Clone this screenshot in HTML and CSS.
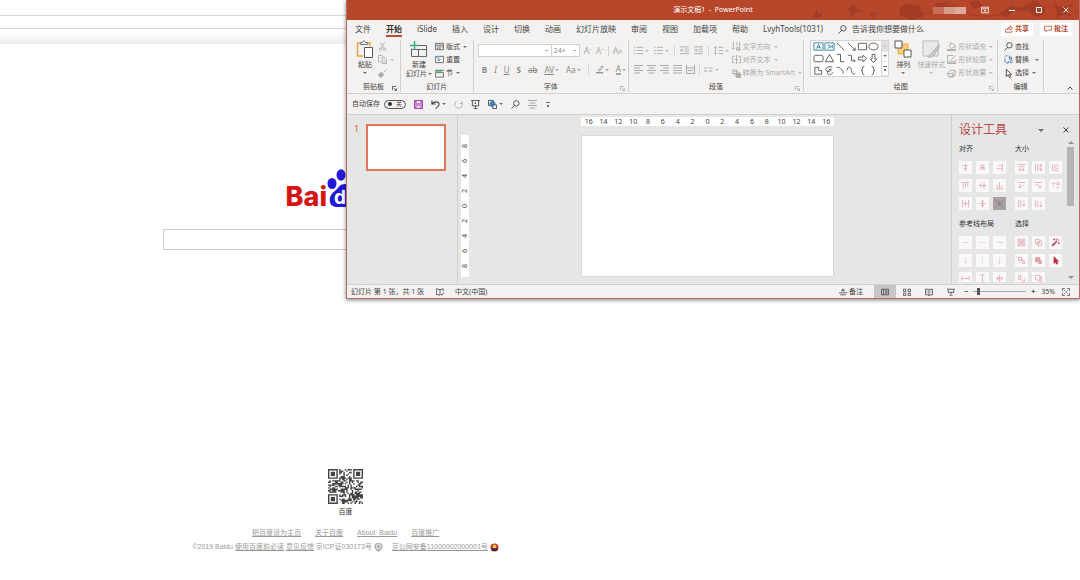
FILE: index.html
```
<!DOCTYPE html>
<html lang="zh-CN">
<head>
  <meta charset="UTF-8" />
  <title>演示文稿1 - PowerPoint</title>
  <link rel="stylesheet" href="styles.css">
</head>
<body>
  <svg class="sprite" aria-hidden="true">
    <symbol id="paste" viewBox="0 0 18 18"><path d="M7 16H1.500V3H5M10 3h4v3" stroke="#e8a33d" stroke-width="1.500"/><path d="M4.500 4.500v-2h2c0-2 3-2 3 0h2v2z" fill="#fff" stroke="#777"/><path d="M8.500 7.500h8v10h-8z" fill="#fff" stroke="#555"/></symbol>
    <symbol id="cut" viewBox="0 0 10 10"><path d="M2.500 0.500L6.500 7M7.500 0.500L3.500 7"/><circle cx="2.700" cy="8" r="1.300"/><circle cx="7.300" cy="8" r="1.300"/></symbol>
    <symbol id="copy" viewBox="0 0 10 10"><path d="M3 7.500H0.500v-7h4l1.500 1.500"/><path d="M4.500 2.500h3l2 2v5h-5zM6 5.500h2M6 7.500h2"/></symbol>
    <symbol id="brush" viewBox="0 0 10 10"><path d="M9.500 0.500L6 4M3.500 3.500l3 3"/><path d="M3 4l3 3-3 2.500-2.500-3z" fill="currentColor"/></symbol>
    <symbol id="newslide" viewBox="0 0 18 16"><path d="M4.500 4.500h12v11h-15v-8M8.500 8v7M2 8.500h14" stroke="#666"/><path d="M4.500 0v9M0 4.500h9" stroke="#3fae7c" stroke-width="1.500"/></symbol>
    <symbol id="layout" viewBox="0 0 10 8"><path d="M.5.500h9v7h-9zM.5 2.500h9M5.500 3v4M2 4.500h2M7 4.500h1.500M2 6h2" stroke="#666"/></symbol>
    <symbol id="reset" viewBox="0 0 10 8"><path d="M3.500.500h6v7h-9V3" stroke="#666"/><path d="M.5 3V.5H3M.5 1c3 0 4 1 4 4M3 4l1.500 1.500L6 4" stroke="#3983bd"/></symbol>
    <symbol id="section" viewBox="0 0 10 9"><path d="M0 1h10M.5 3.500h9v5h-9z" stroke="#666"/><path d="M0 1.500h8" stroke="#4ca779" stroke-width="2"/></symbol>
    <symbol id="list" viewBox="0 0 10 9"><path d="M0 1h1.500M3 1h7M0 4.500h1.500M3 4.500h7M0 8h1.500M3 8h7"/></symbol>
    <symbol id="numlist" viewBox="0 0 10 9"><path d="M1 0v2M3 1h7M0 4.500h2M3 4.500h7M1 7v2M3 8h7"/></symbol>
    <symbol id="indent" viewBox="0 0 10 9"><path d="M0 .5h10M5 3h5M5 5.500h5M0 8h10M4 4.200H.5M2 2.500L.5 4.200 2 6"/></symbol>
    <symbol id="outdent" viewBox="0 0 10 9"><path d="M0 .5h10M5 3h5M5 5.500h5M0 8h10M0 4.200h3.500M2 2.500l1.500 1.700L2 6"/></symbol>
    <symbol id="spacing" viewBox="0 0 10 9"><path d="M1.500 0v9M0 2l1.500-1.500L3 2M0 7l1.500 1.500L3 7M5 1h5M5 4.500h5M5 8h5"/></symbol>
    <symbol id="left" viewBox="0 0 9 9"><path d="M0 .5h9M0 3h6M0 5.500h9M0 8h6"/></symbol>
    <symbol id="center" viewBox="0 0 9 9"><path d="M0 .5h9M1.500 3h6M0 5.500h9M1.500 8h6"/></symbol>
    <symbol id="right" viewBox="0 0 9 9"><path d="M0 .5h9M3 3h6M0 5.500h9M3 8h6"/></symbol>
    <symbol id="justify" viewBox="0 0 9 9"><path d="M0 .5h9M0 3h9M0 5.500h9M0 8h9"/></symbol>
    <symbol id="distribute" viewBox="0 0 9 9"><path d="M.5 0v9M8.500 0v9M0 3h9M2 5.500h5M0 8.500h9"/></symbol>
    <symbol id="columns" viewBox="0 0 9 9"><path d="M0 3h3.500M5 3h3.500M0 6h3.500M5 6h3.500"/></symbol>
    <symbol id="direction" viewBox="0 0 10 10"><path d="M1.500 0v8M0 6.500L1.500 8 3 6.500M5.500 0v4M8.500 0v10M5 6h2v3H5zM7 8l1.500 1.500L10 8"/></symbol>
    <symbol id="aligntext" viewBox="0 0 10 10"><path d="M3 1.500H.5v7H3M7 1.500h2.500v7H7M5 0v10M3 5h4"/></symbol>
    <symbol id="smartart" viewBox="0 0 10 10"><path d="M.5 1h5v4h-5zM3 5v2.500h2M5 4.500h4.500v5H5zM2 3h5"/><path d="M6 5.500h3v3H6z" fill="currentColor"/></symbol>
    <symbol id="arrange" viewBox="0 0 18 18"><path d="M4 4h10v10H4z" fill="#f8cb78" stroke="#e9aa42"/><path d="M1 1h7v7H1zM10 10h7v7h-7z" fill="#fff" stroke="#555"/></symbol>
    <symbol id="quickstyle" viewBox="0 0 19 19"><path d="M1 1h16v16H1z" fill="#e9e9e9" stroke="#bbb"/><path d="M18 5l-7 8-5 5c4 0 6 0 7-3l5-7z" fill="#ccc" stroke="#aaa"/></symbol>
    <symbol id="fill" viewBox="0 0 10 10"><path d="M2 4.500L5.500 1 9 4.500 5 7.500zM4 0v3M9 5v2"/><path d="M0 9h10" stroke-width="2"/></symbol>
    <symbol id="outline" viewBox="0 0 10 10"><path d="M7 .5H.5v7h9V5M9.500.500L4 6"/><path d="M0 9.300h10" stroke-width="1.500"/></symbol>
    <symbol id="effect" viewBox="0 0 10 10"><path d="M3.500 1.500h5l1 2.500-3 4h-5l-1-3zM.5 5h5.500l3-3M6 5l.5 3M2 9h5l3-4"/></symbol>
    <symbol id="find" viewBox="0 0 10 10"><circle cx="6" cy="3.700" r="3"/><path d="M4 6L.5 9.500"/></symbol>
    <symbol id="replace" viewBox="0 0 10 10"><path d="M6 .5v4M6 2.500h2.500v2H6M1 2.500C1 1 2.500.500 4 1M1 4l0 3c1 2 3 2 4 1M4 6.500L5.500 8 4 9.500M9.500 6h-2v2.500h2" stroke="#4677b8"/></symbol>
    <symbol id="select" viewBox="0 0 10 10"><path d="M2.500.500v8l2-2 1.500 3 1.500-.5-1.500-3h2.500z"/></symbol>
    <symbol id="launcher" viewBox="0 0 5 5"><path d="M.5 4V.5H4M2 2l2.500 2.500M4.500 2.500v2h-2"/></symbol>
    <symbol id="pen" viewBox="0 0 10 10"><path d="M3 6l4.500-5.500L9 2 4.500 7z"/><path d="M0 9h9" stroke-width="1.500"/></symbol>
    <symbol id="save" viewBox="0 0 10 10"><path d="M.7.700h8.600v8.600H.700z" fill="#d68be0" stroke="#a04cae" stroke-width="1.200"/><path d="M2.500 1h5v3h-5zM2.500 6.500h5V9h-5z" fill="#fff" stroke="#a04cae" stroke-width=".6"/></symbol>
    <symbol id="undo" viewBox="0 0 10 10"><path d="M1 .5v4h4M1 4.500C3.500 1 9 1.500 9 5c0 2-2 3-4 4.500" stroke-width="1.200"/></symbol>
    <symbol id="redo" viewBox="0 0 10 10"><path d="M9 1v3H6M3 1C-1 4 1 9 5 9s6-3 4-5.500"/></symbol>
    <symbol id="present" viewBox="0 0 10 10"><path d="M0 .5h10M1.500 1v5.500h7V1M5 6.500V9M3 9.500h4"/><path d="M4.500 2.800v1.500l1-.7z" fill="currentColor"/></symbol>
    <symbol id="shapes" viewBox="0 0 10 10"><path d="M.5.500h5.500v5.500H.500z" fill="#fff"/><circle cx="5" cy="4.500" r="3" fill="#3c86c6" stroke="#3c86c6"/><path d="M5.500 5.500h4v4h-4z" fill="#fff"/></symbol>
    <symbol id="comment" viewBox="0 0 10 10"><path d="M.5 1.500h9v5h-5l-2 2v-2h-2z"/></symbol>
    <symbol id="share" viewBox="0 0 10 10"><path d="M.5 5v4h8V7M2.500 6c0-2 2-3 4-3V1L9.500 4 6.500 6V5c-2 0-3 0-4 1z"/></symbol>
    <symbol id="book" viewBox="0 0 10 10"><path d="M5 2L.5 1v7L5 9V2l4-1v3M6 7.500l1.500 1.500L10 5.500"/></symbol>
    <symbol id="notes" viewBox="0 0 10 10"><path d="M3 3.500h4L5 1zM0 6h10M1.500 8.500h7"/></symbol>
    <symbol id="normal" viewBox="0 0 10 10"><path d="M.5 1.500h9v7h-9zM3 1.500v7M5 3.500h3M5 6.500h3M5 5h3"/></symbol>
    <symbol id="sorter" viewBox="0 0 10 10"><path d="M.5 1.500h3v3h-3zM6.500 1.500h3v3h-3zM.5 6.500h3v3h-3zM6.500 6.500h3v3h-3z"/></symbol>
    <symbol id="reading" viewBox="0 0 10 10"><path d="M.5 1.500h3L5 2.500l1.500-1h3v7h-3L5 9.500l-1.500-1h-3zM5 2.500v7M2 3.500h1M2 5.500h1M7 3.500h1M7 5.500h1"/></symbol>
    <symbol id="show" viewBox="0 0 10 10"><path d="M0 1.500h10M1.500 2v3.500h7V2M5 5.500V8M3 9h4"/></symbol>
    <symbol id="fit" viewBox="0 0 10 10"><path d="M3.500.500h-3v3M6.500.500h3v3M.5 6.500v3h3M9.500 6.500v3h-3M3 3l1.300 1.300M7 3L5.700 4.300M3 7l1.300-1.300M7 7L5.700 5.700"/></symbol>
    <symbol id="ribbonopt" viewBox="0 0 10 10"><path d="M.5 1.500h9v7h-9zM.5 3.500h9M5 8V5M3.500 6.200L5 5l1.500 1.200"/></symbol>
    <symbol id="min" viewBox="0 0 8 8"><path d="M1 4.500h6"/></symbol>
    <symbol id="max" viewBox="0 0 8 8"><path d="M1.500 1.500h5v5h-5z"/></symbol>
    <symbol id="close" viewBox="0 0 8 8"><path d="M1.500 1.500l5 5M6.500 1.500l-5 5"/></symbol>
  </svg>

  <div class="browser">
    <div class="browser-bars">
      <div class="bar"></div>
      <div class="bar bookmarks"></div>
      <div class="bar-shade"></div>
    </div>

    <main class="baidu">
      <div class="logo">
        <span>Bai</span>
        <svg class="paw" viewBox="0 0 36 40">
          <g fill="#2319dc"><ellipse cx="5" cy="15.500" rx="4.500" ry="5.500"/><ellipse cx="14" cy="7" rx="4.500" ry="5.800"/><ellipse cx="25" cy="7" rx="4.500" ry="5.800"/><ellipse cx="32" cy="17" rx="4" ry="5.500"/><path d="M18 16c-5 0-6 3-9 6-5 4-7 7-6 12 1 6 8 5 15 5s15 1 16-5c0-5-2-8-7-12-3-3-4-6-9-6z"/></g>
          <text x="7" y="36" class="paw-text">du</text>
        </svg>
      </div>
      <form class="search"><input type="text" aria-label="百度搜索"></form>
    </main>

    <footer class="foot">
      <svg class="qr" id="qr" viewBox="0 0 25 25"></svg>
      <p class="qr-label">百度</p>
      <nav class="foot-links">
        <a href="#">把百度设为主页</a>
        <a href="#">关于百度</a>
        <a href="#">About&nbsp; Baidu</a>
        <a href="#">百度推广</a>
      </nav>
      <p class="copyright">©2019 Baidu <a href="#">使用百度前必读</a> <a href="#">意见反馈</a> 京ICP证030173号
        <svg class="badge" viewBox="0 0 10 10"><path d="M5 0c3 0 4.500 1 4.500 4C9.500 7 7 8 5 10 3 8 .5 7 .5 4 .5 1 2 0 5 0z" fill="#aaa"/><circle cx="5" cy="4" r="2.400" fill="none" stroke="#fff"/></svg>
        <a href="#" class="police">京公网安备11000002000001号</a>
        <svg class="badge" viewBox="0 0 10 10"><circle cx="5" cy="5" r="4.500" fill="#c53a22"/><path d="M1 6h8L7.500 9h-5z" fill="#342c50"/><path d="M3 3l2-1.500L7 3l-.5 2.500h-3z" fill="#f3c94b"/></svg>
      </p>
    </footer>
  </div>

  <div class="ppt">
    <header class="titlebar">
      <svg class="flora" viewBox="0 0 270 20" preserveAspectRatio="xMaxYMid slice">
        <g fill="#a33c24"><path d="M3 17l5-7 2 4 4-3-3 7zM38 9l7-5 3 5 7 2-8 2-5 5-1-6zM60 14l8-2-4 6z"/><path d="M92 7c4-5 9-4 12-1 6-3 10 1 8 5 5 3 2 8-4 7-4 4-9 3-11-1-7 1-9-6-5-10z"/><path d="M125 4l18-3-7 5 14-2-12 6-3 6-5-7zM160 2l9-2 5 6-9 3zM190 14l12-8 9 2 15-7-9 9-12 1-8 7z"/><path d="M222 2c5-3 9 0 9 4 6 0 7 6 2 8-1 4-8 4-9 0-6-1-6-7-2-12zM245 3l8 5 12-5-7 8 7 7-10-4-8 5 1-8z"/></g>
        <path d="M110 14q30-6 50 0t50-4 60 4" fill="none" stroke="#a33c24"/>
      </svg>
      <h1>演示文稿1 &nbsp;- &nbsp;PowerPoint</h1>
      <div class="win-buttons">
        <span class="user"><i></i><i></i><i></i></span>
        <button aria-label="功能区显示选项"><svg><use href="#ribbonopt"/></svg></button>
        <button aria-label="最小化"><svg><use href="#min"/></svg></button>
        <button aria-label="最大化"><svg><use href="#max"/></svg></button>
        <button aria-label="关闭"><svg><use href="#close"/></svg></button>
      </div>
    </header>

    <nav class="tabs">
      <button>文件</button>
      <button class="active">开始</button>
      <button>iSlide</button>
      <button>插入</button>
      <button>设计</button>
      <button>切换</button>
      <button>动画</button>
      <button>幻灯片放映</button>
      <button>审阅</button>
      <button>视图</button>
      <button>加载项</button>
      <button>帮助</button>
      <button>LvyhTools(1031)</button>
      <button class="tell"><svg><use href="#find"/></svg>告诉我你想要做什么</button>
      <span class="tab-actions">
        <button><svg><use href="#share"/></svg>共享</button>
        <button><svg><use href="#comment"/></svg>批注</button>
      </span>
    </nav>

    <div class="ribbon">
      <section class="group">
        <div class="group-body clipboard">
          <button class="big"><svg class="lg"><use href="#paste"/></svg>粘贴<b class="caret"></b></button>
          <div class="stack off">
            <button aria-label="剪切"><svg><use href="#cut"/></svg></button>
            <button aria-label="复制"><svg><use href="#copy"/></svg><b class="caret"></b></button>
            <button aria-label="格式刷"><svg><use href="#brush"/></svg></button>
          </div>
        </div>
        <h2>剪贴板<svg class="launch"><use href="#launcher"/></svg></h2>
      </section>

      <section class="group">
        <div class="group-body slides">
          <button class="big"><svg class="lg"><use href="#newslide"/></svg>新建<span>幻灯片<b class="caret"></b></span></button>
          <div class="stack">
            <button><svg><use href="#layout"/></svg>版式<b class="caret"></b></button>
            <button><svg><use href="#reset"/></svg>重置</button>
            <button><svg><use href="#section"/></svg>节<b class="caret"></b></button>
          </div>
        </div>
        <h2>幻灯片</h2>
      </section>

      <section class="group">
        <div class="group-body two-rows off">
          <div class="tools">
            <select class="font-name" aria-label="字体"><option></option></select><select class="font-size" aria-label="字号"><option>24+</option></select>
            <button class="glyph">A<sup>ˆ</sup></button>
            <button class="glyph small-a">A<sup>ˇ</sup></button>
            <i class="sep"></i>
            <button class="glyph">A<sub>p</sub></button>
          </div>
          <div class="tools font-row">
            <button><strong>B</strong></button>
            <button><em>I</em></button>
            <button><u>U</u></button>
            <button><strong>S</strong></button>
            <button><s>ab</s></button>
            <button><u>AV</u><b class="caret"></b></button>
            <button>Aa<b class="caret"></b></button>
            <i class="sep"></i>
            <button aria-label="突出显示"><svg><use href="#pen"/></svg><b class="caret"></b></button>
            <button><span class="font-color">A</span><b class="caret"></b></button>
          </div>
        </div>
        <h2>字体<svg class="launch off"><use href="#launcher"/></svg></h2>
      </section>

      <section class="group">
        <div class="group-body paragraph off">
          <div class="two-rows">
            <div class="tools">
              <button aria-label="项目符号"><svg><use href="#list"/></svg><b class="caret"></b></button>
              <button aria-label="编号"><svg><use href="#numlist"/></svg><b class="caret"></b></button>
              <i class="sep"></i>
              <button aria-label="减少缩进"><svg><use href="#indent"/></svg></button>
              <button aria-label="增加缩进"><svg><use href="#outdent"/></svg></button>
              <i class="sep"></i>
              <button aria-label="行距"><svg><use href="#spacing"/></svg><b class="caret"></b></button>
            </div>
            <div class="tools align-row">
              <button aria-label="左对齐"><svg><use href="#left"/></svg></button>
              <button aria-label="居中"><svg><use href="#center"/></svg></button>
              <button aria-label="右对齐"><svg><use href="#right"/></svg></button>
              <button aria-label="两端对齐"><svg><use href="#justify"/></svg></button>
              <button aria-label="分散对齐"><svg><use href="#distribute"/></svg></button>
              <i class="sep"></i>
              <button aria-label="分栏"><svg><use href="#columns"/></svg><b class="caret"></b></button>
            </div>
          </div>
          <div class="stack">
            <button><svg><use href="#direction"/></svg>文字方向<b class="caret"></b></button>
            <button><svg><use href="#aligntext"/></svg>对齐文本<b class="caret"></b></button>
            <button><svg><use href="#smartart"/></svg>转换为 SmartArt<b class="caret"></b></button>
          </div>
        </div>
        <h2>段落<svg class="launch off"><use href="#launcher"/></svg></h2>
      </section>

      <section class="group">
        <div class="group-body drawing">
          <div class="gallery">
            <div class="gallery-items" id="gallery"></div>
            <div class="gallery-scroll">
              <button aria-label="上一行"><b class="caret up"></b></button>
              <button aria-label="下一行"><b class="caret"></b></button>
              <button aria-label="其他"><b class="caret more"></b></button>
            </div>
          </div>
          <button class="big"><svg class="lg"><use href="#arrange"/></svg>排列<b class="caret"></b></button>
          <button class="big off"><svg class="lg"><use href="#quickstyle"/></svg>快速样式<b class="caret"></b></button>
          <div class="stack off">
            <button><svg><use href="#fill"/></svg>形状填充<b class="caret"></b></button>
            <button><svg><use href="#outline"/></svg>形状轮廓<b class="caret"></b></button>
            <button><svg><use href="#effect"/></svg>形状效果<b class="caret"></b></button>
          </div>
        </div>
        <h2>绘图<svg class="launch off"><use href="#launcher"/></svg></h2>
      </section>

      <section class="group">
        <div class="group-body editing">
          <div class="stack">
            <button><svg><use href="#find"/></svg>查找</button>
            <button><svg><use href="#replace"/></svg>替换<b class="caret far"></b></button>
            <button><svg><use href="#select"/></svg>选择<b class="caret"></b></button>
          </div>
        </div>
        <h2>编辑</h2>
      </section>

      <div class="collapse"><button aria-label="折叠功能区"><svg viewBox="0 0 8 8"><path d="M1.500 5.500L4 3l2.500 2.500"/></svg></button></div>
    </div>

    <div class="qat">
      <label for="autosave">自动保存</label>
      <span class="switch"><input type="checkbox" id="autosave"><span>关</span></span>
      <button aria-label="保存"><svg><use href="#save"/></svg></button>
      <button aria-label="撤消"><svg><use href="#undo"/></svg><b class="caret"></b></button>
      <button aria-label="重做" class="off"><svg><use href="#redo"/></svg></button>
      <button aria-label="放映"><svg><use href="#present"/></svg></button>
      <button aria-label="形状"><svg><use href="#shapes"/></svg><b class="caret"></b></button>
      <button aria-label="查找"><svg><use href="#find"/></svg></button>
      <button aria-label="对齐" class="off"><svg><use href="#center"/></svg></button>
      <button aria-label="自定义"><b class="caret more"></b></button>
    </div>

    <div class="work">
      <aside class="thumbs">
        <span>1</span>
        <div class="thumb"></div>
      </aside>

      <div class="canvas">
        <div class="ruler-h" id="ruler-h"></div>
        <div class="ruler-v" id="ruler-v"></div>
        <div class="slide"></div>
      </div>

      <aside class="design">
        <div class="design-head">
          <h2>设计工具</h2>
          <button aria-label="选项"><b class="caret wide"></b></button>
          <button aria-label="关闭窗格"><svg><use href="#close"/></svg></button>
        </div>
        <div class="design-body">
          <div class="palettes" id="palettes"></div>
          <div class="scroll">
            <b class="caret wide up"></b>
            <div class="scroll-thumb"></div>
            <b class="caret wide"></b>
          </div>
        </div>
      </aside>
    </div>

    <footer class="status">
      <span>幻灯片 第 1 张，共 1 张</span>
      <svg class="proof"><use href="#book"/></svg>
      <span>中文(中国)</span>
      <div class="views">
        <button class="notes"><svg><use href="#notes"/></svg>备注</button>
        <button class="on" aria-label="普通视图"><svg><use href="#normal"/></svg></button>
        <button aria-label="幻灯片浏览"><svg><use href="#sorter"/></svg></button>
        <button aria-label="阅读视图"><svg><use href="#reading"/></svg></button>
        <button aria-label="幻灯片放映"><svg><use href="#show"/></svg></button>
      </div>
      <div class="zoom">
        <button><strong>−</strong></button>
        <input type="range" min="0" max="100" value="8" aria-label="缩放">
        <button><strong>+</strong></button>
        <span>35%</span>
        <button aria-label="适应窗口"><svg><use href="#fit"/></svg></button>
      </div>
    </footer>
  </div>

  <script>
    function icon(d, cls) {
      return `<svg class="${cls || ""}" viewBox="0 0 12 12"><path d="${d}"/></svg>`;
    }

    // shape gallery, three rows of six
    const shapes = [
      ["M1 2h10v8H1zM4 8.500L6 3.500l2 5M4.800 7h2.400", "blue"],
      ["M1 2h10v8H1zM4 4l4 2-4 2M9 4v4", "blue"],
      ["M2 2l8 8"],
      ["M2 2l8 8M10 7v3H7"],
      ["M1.500 2.500h9v7h-9z"],
      ["M1 6c0-5 10-5 10 0s-10 5-10 0z"],
      ["M3 2.500h6q2 0 2 2v3q0 2-2 2H3q-2 0-2-2v-3q0-2 2-2z"],
      ["M6 1.500l4.500 8h-9z"],
      ["M2 1.500h4v8h4"],
      ["M2 2.500h4v6h4M8.500 7L10 8.500 8.500 10"],
      ["M1.500 4.500h5v-2L10.500 6l-4 3.500v-2h-5z"],
      ["M4.500 1.500h3v5h2L6 10.500 2.500 6.500h2z"],
      ["M2 2.500h4.500q-1 3 0 3.500t3 0v4H2z"],
      ["M9 2c-5-1-8 2-7 4s6 1 6-1-5 1-4 4 5 1 6-1"],
      ["M2 2.500c4 0 7 3 7 7"],
      ["M1 6c1-5 4-5 5 0s3 4 4 3"],
      ["M8 1.500q-2 0-2 2v1q0 1.500-1.500 1.500Q6 6 6 7.500v1q0 2 2 2"],
      ["M4 1.500q2 0 2 2v1Q6 6 7.500 6 6 6 6 7.500v1q0 2-2 2"]
    ];
    document.getElementById("gallery").innerHTML = shapes.map(([d, cls]) => icon(d, cls)).join("");

    // design panel buttons
    const palettes = [
      { title: "对齐", items: [
        ["M6 1v10M2 3.500h7M3 7.500h5"], ["M4 3h4v3H4zM2 8h8M3 6.500h6"], ["M10 1v10M4 3.500h5M2 7.500h7"],
        ["M1 2h10M3 3v7M6 3v5M9 3v4"], ["M1 6h10M4 3v6M8 2v8"], ["M1 10.500h10M3 5v5M6 2v8M9 6v4"],
        ["M2 1v10M10 1v10M6 3v6M3 6h6"], ["M2 6h8M4 3h4M4 9h4M6 1v10"], ["M1 1l10 10M11 1L1 11M3 6h6M6 3v6", "held"]] },
      { title: "大小", items: [
        ["M1 2h10M2 5h8M3 8h2v2H3zM7 8h2v2H7z"], ["M2 1v10M5 2v8M8 2h2v3H8zM8 7h2v3H8z"], ["M2 2v8h8M5 2v5h5M8 2v2h2"],
        ["M1 2h10M3 5h2M3 7h2v2H3zM7 6h3"], ["M1 2h10M2 5h4M7 7h2v2H7z"], ["M1 3h5M2 6h2M8 2h3v3H8zM7 9h4M3 9h1"],
        ["M2 1v10M5 1v10M8 3h2M8 7h2v2H8z"], ["M2 1v10M5 3v8M8 5h2M8 8h2v2H8z"]] },
      { title: "参考线布局", items: [
        ["M2 6h8", "pale"], ["M2 6h3M7 6h3M3 5v2", "pale"], ["M3 6h7M8 4l2 2-2 2", "pale"],
        ["M6 2v8M4 8h4", "pale"], ["M6 2v3M6 7v3", "pale"], ["M6 2v8M4 8l2 2 2-2", "pale"],
        ["M1 3v6M11 3v6M1 6h10"], ["M3 1h6M3 11h6M6 1v10"], ["M2 6h8M6 1v10M3 3v6M9 3v6"]] },
      { title: "选择", items: [
        ["M1.500 1.500h9v9h-9zM4 4h4v4H4zM2 2l8 8M10 2l-8 8"], ["M2 2h5v5H2zM5 5h5v5H5zM3 9h1M8 3h2"], ["M1.500 10.500L8 4M9 3l1-1M4 1v2M3 2h2M7 1v1M10.500 6v2", "wand"],
        ["M2 2h4v4H2zM7 7h3v3H7zM6 4l3 2M3 8v2"], ["M2 2h6v6H2zM3 4h4M3 6h4M10 5v5H5", "bold"], ["M4 1v9l2-2 1.500 3 1.500-1-1.500-3H10z", "solid"],
        ["M2 2h3v5H2zM5 7l2 3h3V7"], ["M2 2h6v6H2zM8 4h2v6H6"]] }
    ];
    document.getElementById("palettes").innerHTML = palettes.map(p =>
      `<section><h3>${p.title}</h3><div class="palette">` +
      p.items.map(([d, cls], i) => `<button class="${cls || ""}" aria-label="${p.title}${i + 1}">${icon(d)}</button>`).join("") +
      `</div></section>`).join("");

    // rulers count outwards from the middle
    function ruler(id, max) {
      let out = "";
      for (let n = -max; n <= max; n += 2) out += `<span>${Math.abs(n)}</span>`;
      document.getElementById(id).innerHTML = out;
    }
    ruler("ruler-h", 16);
    ruler("ruler-v", 8);

    // QR code: three finder squares and a scattered body
    function drawQr() {
      const size = 25;
      let seed = 2019;
      let d = "";
      for (let y = 0; y < size; y++) {
        for (let x = 0; x < size; x++) {
          seed = (seed * 16807) % 2147483647;
          const corner = (x < 8 && y < 8) || (x > 16 && y < 8) || (x < 8 && y > 16);
          let dark = seed % 100 < 54;
          if (corner) {
            const cx = x > 16 ? 21 : 3;
            const cy = y > 16 ? 21 : 3;
            const r = Math.max(Math.abs(x - cx), Math.abs(y - cy));
            dark = r === 3 || r < 2;
          }
          if (dark) d += `M${x} ${y}h1v1h-1z`;
        }
      }
      document.getElementById("qr").innerHTML = `<path d="${d}"/>`;
    }
    drawQr();
  </script>
</body>
</html>
```
FILE: styles.css
```
* {
  box-sizing: border-box;
}

body {
  margin: 0;
  background: #fff;
  color: #444;
  font-family: "Noto Sans", "Noto Sans CJK SC", sans-serif;
  font-size: 7px;
  line-height: 10px;
}

h1, h2, h3, p {
  margin: 0;
  font-size: 7px;
  font-weight: normal;
}

button {
  display: inline-flex;
  align-items: center;
  gap: 2px;
  margin: 0;
  padding: 0;
  border: 0;
  background: none;
  color: inherit;
  font: inherit;
  white-space: nowrap;
}

svg {
  flex: none;
  width: 10px;
  height: 10px;
  fill: none;
  stroke: currentColor;
}

.sprite {
  position: absolute;
  width: 0;
  height: 0;
}

.caret {
  width: 0;
  height: 0;
  margin-left: 1px;
  border: 2px solid transparent;
  border-top-color: currentColor;
  border-bottom: 0;
  opacity: 0.75;
}

.caret.up {
  border-top: 0;
  border-bottom: 2px solid currentColor;
}

.caret.wide {
  border-width: 3px;
  border-bottom: 0;
}

.caret.wide.up {
  border-top: 0;
  border-bottom: 3px solid currentColor;
}

.caret.far {
  margin-left: 4px;
}

.caret.more {
  width: 4px;
  height: 5px;
  border: 0;
  border-top: 1px solid currentColor;
  background: linear-gradient(currentColor, currentColor) center bottom / 2px 2px no-repeat;
}

.off {
  color: #aaa;
}

/* browser behind */
.browser {
  display: flex;
  flex-direction: column;
  min-height: 100vh;
}

.bar {
  height: 16px;
  border-bottom: 1px solid #d5d5d5;
}

.bar.bookmarks {
  height: 13px;
}

.bar-shade {
  height: 15px;
  background: linear-gradient(#fff 20%, #ececec);
}

.baidu,
.foot {
  width: 64%;
  text-align: center;
}

.baidu {
  padding-top: 124px;
}

.logo {
  display: flex;
  align-items: flex-end;
  width: 120px;
  margin: 0 auto;
  color: #d71414;
  font: 800 27px/28px Inter, "Liberation Sans", sans-serif;
}

.logo span {
  height: 25px;
}

.paw {
  width: 36px;
  height: 40px;
  stroke: none;
}

.paw-text {
  fill: #fff;
  font: 700 19px Inter, "Liberation Sans", sans-serif;
}

.search {
  display: flex;
  width: 366px;
  margin: 21px auto 0;
}

.search input {
  flex: 1;
  height: 21px;
  padding: 0 4px;
  border: 1px solid #ccc;
  background: #fff;
  font: inherit;
}

.foot {
  margin-top: auto;
  padding-bottom: 28px;
  color: #999;
  font-family: "Liberation Sans", "Noto Sans CJK SC", sans-serif;
}

.foot a {
  color: #999;
}

.qr {
  display: block;
  width: 35px;
  height: 35px;
  margin: 0 auto;
  fill: #444;
  stroke: none;
}

.qr-label {
  margin-top: 3px;
  color: #333;
}

.foot-links {
  display: flex;
  justify-content: center;
  gap: 14px;
  margin: 11px 0 4px;
}

.badge {
  width: 9px;
  height: 9px;
  stroke: none;
  vertical-align: middle;
}

.police {
  margin-left: 7px;
}

/* powerpoint window */
.ppt {
  position: absolute;
  top: 0;
  left: 346px;
  right: 0;
  border: 1px solid #bb6a60;
  border-top: 0;
  background: #f3f2f1;
  box-shadow: 0 1px 4px rgba(0, 0, 0, 0.5);
}

.titlebar {
  position: relative;
  display: grid;
  grid-template-columns: 1fr auto 1fr;
  align-items: center;
  height: 20px;
  background: #b7472a;
  color: #fff;
}

.titlebar h1 {
  grid-column: 2;
}

.flora {
  position: absolute;
  top: 0;
  right: 0;
  width: 270px;
  height: 20px;
  stroke: none;
}

.win-buttons {
  position: relative;
  display: flex;
  align-items: center;
  justify-content: flex-end;
  gap: 19px;
  padding-right: 9px;
}

.win-buttons svg {
  width: 8px;
  height: 8px;
}

.user {
  display: flex;
  margin-right: -4px;
}

.user i {
  width: 11px;
  height: 7px;
  background: #c9705a;
}

.user i:nth-child(2) {
  background: #d79b8c;
}

.user i:nth-child(3) {
  background: #dda99c;
}

.tabs {
  display: flex;
  align-items: center;
  gap: 15px;
  height: 18px;
  padding: 0 7px 0 8px;
  font-size: 8px;
}

.tabs .active {
  position: relative;
  color: #333;
  font-weight: bold;
}

.tabs .active::after {
  content: "";
  position: absolute;
  right: 0;
  bottom: -3px;
  left: 0;
  height: 2px;
  background: #c2492d;
}

.tell {
  gap: 5px;
}

.tell svg {
  width: 9px;
  height: 9px;
}

.tab-actions {
  display: flex;
  gap: 7px;
  margin-left: auto;
  font-size: 7px;
}

.tab-actions button {
  height: 13px;
  padding: 0 4px;
  border-radius: 1px;
  background: #fff;
  color: #b7472a;
  font-weight: bold;
}

.tab-actions svg {
  width: 8px;
  height: 8px;
}

.ribbon {
  display: grid;
  grid-template-columns: 54fr 73fr 155fr 176fr 194fr 46fr 35fr;
  height: 56px;
  border-bottom: 1px solid #d2d0ce;
}

.group {
  display: flex;
  flex-direction: column;
  justify-content: space-between;
  min-width: 0;
  margin: 2px 0 1px;
  border-right: 1px solid #d0d0d0;
}

.group h2 {
  position: relative;
  text-align: center;
}

.launch {
  position: absolute;
  right: 3px;
  bottom: 1px;
  width: 5px;
  height: 5px;
  opacity: 0.8;
}

.group-body {
  display: flex;
  height: 40px;
}

.big {
  flex-direction: column;
  gap: 0;
  line-height: 9px;
}

.big span {
  display: flex;
  align-items: center;
}

.big > .caret {
  margin: 3px 0 0;
}

.lg {
  width: 18px;
  height: 18px;
  margin-bottom: 2px;
}

.stack {
  display: flex;
  flex-direction: column;
  justify-content: space-around;
  align-items: flex-start;
}

.stack svg {
  width: 9px;
  height: 9px;
}

.clipboard {
  gap: 4px;
  padding-left: 9px;
}

.slides {
  gap: 3px;
  padding-left: 5px;
}

.two-rows {
  display: flex;
  flex-direction: column;
  justify-content: center;
  gap: 6px;
}

.group-body.two-rows {
  padding-left: 4px;
}

.tools {
  display: flex;
  align-items: center;
  gap: 4px;
  height: 13px;
}

.tools svg {
  width: 9px;
  height: 9px;
}

.sep {
  width: 1px;
  height: 10px;
  background: #d5d5d5;
}

.tools select {
  height: 13px;
  padding: 0 2px;
  border: 1px solid #d0d0d0;
  background: #fff linear-gradient(#aaa, #aaa) right 3px center / 3px 1px no-repeat;
  color: #888;
  font: inherit;
  appearance: none;
}

.font-name {
  width: 74px;
}

.font-size {
  width: 29px;
  margin-left: -5px;
}

.glyph {
  gap: 0;
  font-size: 9px;
}

.glyph sup,
.glyph sub {
  font-size: 6px;
  line-height: 6px;
}

.small-a {
  font-size: 8px;
}

.font-row {
  gap: 7px;
  padding-left: 4px;
  color: #888;
  font-size: 8px;
}

.font-row button {
  gap: 0;
}

.font-row svg {
  width: 8px;
}

.font-color {
  border-bottom: 2px solid #aaa;
  line-height: 8px;
}

.paragraph {
  gap: 3px;
  padding-left: 5px;
}

.paragraph .tools {
  gap: 5px;
}

.paragraph .tools button {
  gap: 1px;
}

.paragraph .align-row {
  gap: 4px;
}

.drawing {
  gap: 5px;
  padding-left: 6px;
}

.gallery {
  display: flex;
  height: 37px;
  border: 1px solid #d5d5d5;
  background: #fff;
}

.gallery-items {
  display: grid;
  grid-template-columns: repeat(6, 11px);
  align-content: space-around;
  justify-content: center;
  width: 70px;
  color: #555;
}

.gallery-items svg {
  width: 11px;
  height: 11px;
}

.gallery-items .blue {
  color: #2f7f9f;
}

.gallery-scroll {
  display: grid;
  width: 7px;
  border-left: 1px solid #d5d5d5;
}

.gallery-scroll button {
  justify-content: center;
  border-bottom: 1px solid #e5e5e5;
}

.gallery-scroll button:first-child {
  background: #e1e1e1;
  color: #bbb;
}

.gallery-scroll .caret {
  margin: 0;
}

.drawing .stack {
  margin-left: -3px;
}

.editing {
  padding-left: 6px;
}

.collapse {
  display: flex;
  align-items: flex-end;
  justify-content: flex-end;
  padding: 0 5px 1px 0;
}

.collapse svg,
.design-head svg {
  width: 8px;
  height: 8px;
}

.qat {
  display: flex;
  align-items: center;
  gap: 8px;
  height: 21px;
  padding-left: 5px;
  border-bottom: 1px solid #d2d0ce;
}

.qat button {
  gap: 1px;
}

.qat svg {
  width: 9px;
  height: 9px;
}

.switch {
  display: flex;
  align-items: center;
  justify-content: space-between;
  width: 22px;
  height: 9px;
  margin-left: -4px;
  padding: 0 3px;
  border: 1px solid #555;
  border-radius: 5px;
  font-size: 6px;
  line-height: 7px;
}

.switch input {
  width: 4px;
  height: 4px;
  margin: 0;
  border-radius: 50%;
  background: #333;
  appearance: none;
}

.work {
  display: grid;
  grid-template-columns: 111fr 493fr 128fr;
  height: 169px;
  background: #e6e6e6;
}

.thumbs {
  display: flex;
  align-items: flex-start;
  gap: 7px;
  padding: 9px 11px 0 7px;
  border-right: 1px solid #cfcfcf;
  color: #cf5940;
}

.thumbs span {
  font-size: 9px;
}

.thumb {
  flex: 1;
  aspect-ratio: 80 / 47;
  border: 2px solid #e27558;
  background: #fff;
}

.canvas {
  display: grid;
  grid-template-columns: 8px 112fr 252fr 117fr;
  grid-template-rows: 9px 142px;
  row-gap: 9px;
  padding: 2px 0 0 3px;
}

.ruler-h,
.ruler-v {
  display: flex;
  justify-content: space-around;
  align-items: center;
  background: #fff;
  font-size: 7px;
  line-height: 8px;
}

.ruler-h {
  grid-column: 3;
}

.ruler-h span {
  width: 12px;
  text-align: center;
}

.ruler-v {
  grid-row: 2;
  flex-direction: column;
  padding: 3px 0;
}

.ruler-v span {
  writing-mode: vertical-rl;
  transform: rotate(180deg);
}

.slide {
  grid-row: 2;
  grid-column: 3;
  border: 1px solid #d8d8d8;
  background: #fff;
}

.design {
  display: flex;
  flex-direction: column;
  min-height: 0;
  padding: 7px 4px 2px 7px;
  border-left: 1px solid #cfcfcf;
}

.design-head {
  display: flex;
  align-items: center;
  gap: 18px;
  padding-right: 5px;
}

.design-head h2 {
  flex: 1;
  color: #b94a48;
  font-size: 12px;
  line-height: 16px;
}

.design-body {
  display: flex;
  flex: 1;
  justify-content: space-between;
  min-height: 0;
}

.palettes {
  display: grid;
  grid-template-columns: auto auto;
  align-content: start;
  gap: 9px;
  padding-top: 6px;
  overflow: hidden;
}

.palettes h3 {
  margin-bottom: 7px;
  color: #333;
}

.palette {
  display: grid;
  grid-template-columns: repeat(3, 13px);
  gap: 5px 4px;
}

.palette button {
  justify-content: center;
  height: 13px;
  background: #faf8f8;
  color: #dfa0a6;
}

.palette svg {
  width: 9px;
  height: 9px;
}

.palette .pale {
  color: #d8cccc;
}

.palette .held {
  background: #aaa2a2;
  color: #8a7c7c;
}

.palette .bold path {
  fill: #e0a3a9;
}

.palette .wand,
.palette .solid {
  color: #b8323f;
}

.palette .wand path {
  stroke-width: 2;
}

.palette .solid path {
  fill: #b8323f;
}

.scroll {
  display: flex;
  flex-direction: column;
  align-items: center;
  width: 9px;
  padding: 3px 0 3px;
  color: #777;
}

.scroll .caret {
  margin: 0;
}

.scroll-thumb {
  width: 7px;
  height: 59px;
  margin: 3px 0 auto;
  background: #b5b5b5;
}

.status {
  display: flex;
  align-items: center;
  height: 14px;
  padding: 0 9px 0 4px;
  border-top: 1px solid #d2d0ce;
}

.status svg {
  width: 8px;
  height: 8px;
}

.proof {
  margin: 0 11px 0 12px;
}

.views {
  display: flex;
  align-items: center;
  margin-left: auto;
}

.views button {
  justify-content: center;
  width: 22px;
  height: 13px;
}

.views .notes {
  width: auto;
  margin-right: 11px;
}

.views .on {
  background: #c8c6c4;
}

.zoom {
  display: flex;
  align-items: center;
  gap: 5px;
  margin-left: 2px;
}

.zoom input {
  width: 53px;
  height: 8px;
  margin: 0;
  background: linear-gradient(#aaa, #aaa) center / 100% 1px no-repeat;
  appearance: none;
}

.zoom input::-webkit-slider-thumb {
  width: 3px;
  height: 7px;
  background: #555;
  appearance: none;
}

.zoom span {
  margin: 0 2px 0 1px;
}
```
